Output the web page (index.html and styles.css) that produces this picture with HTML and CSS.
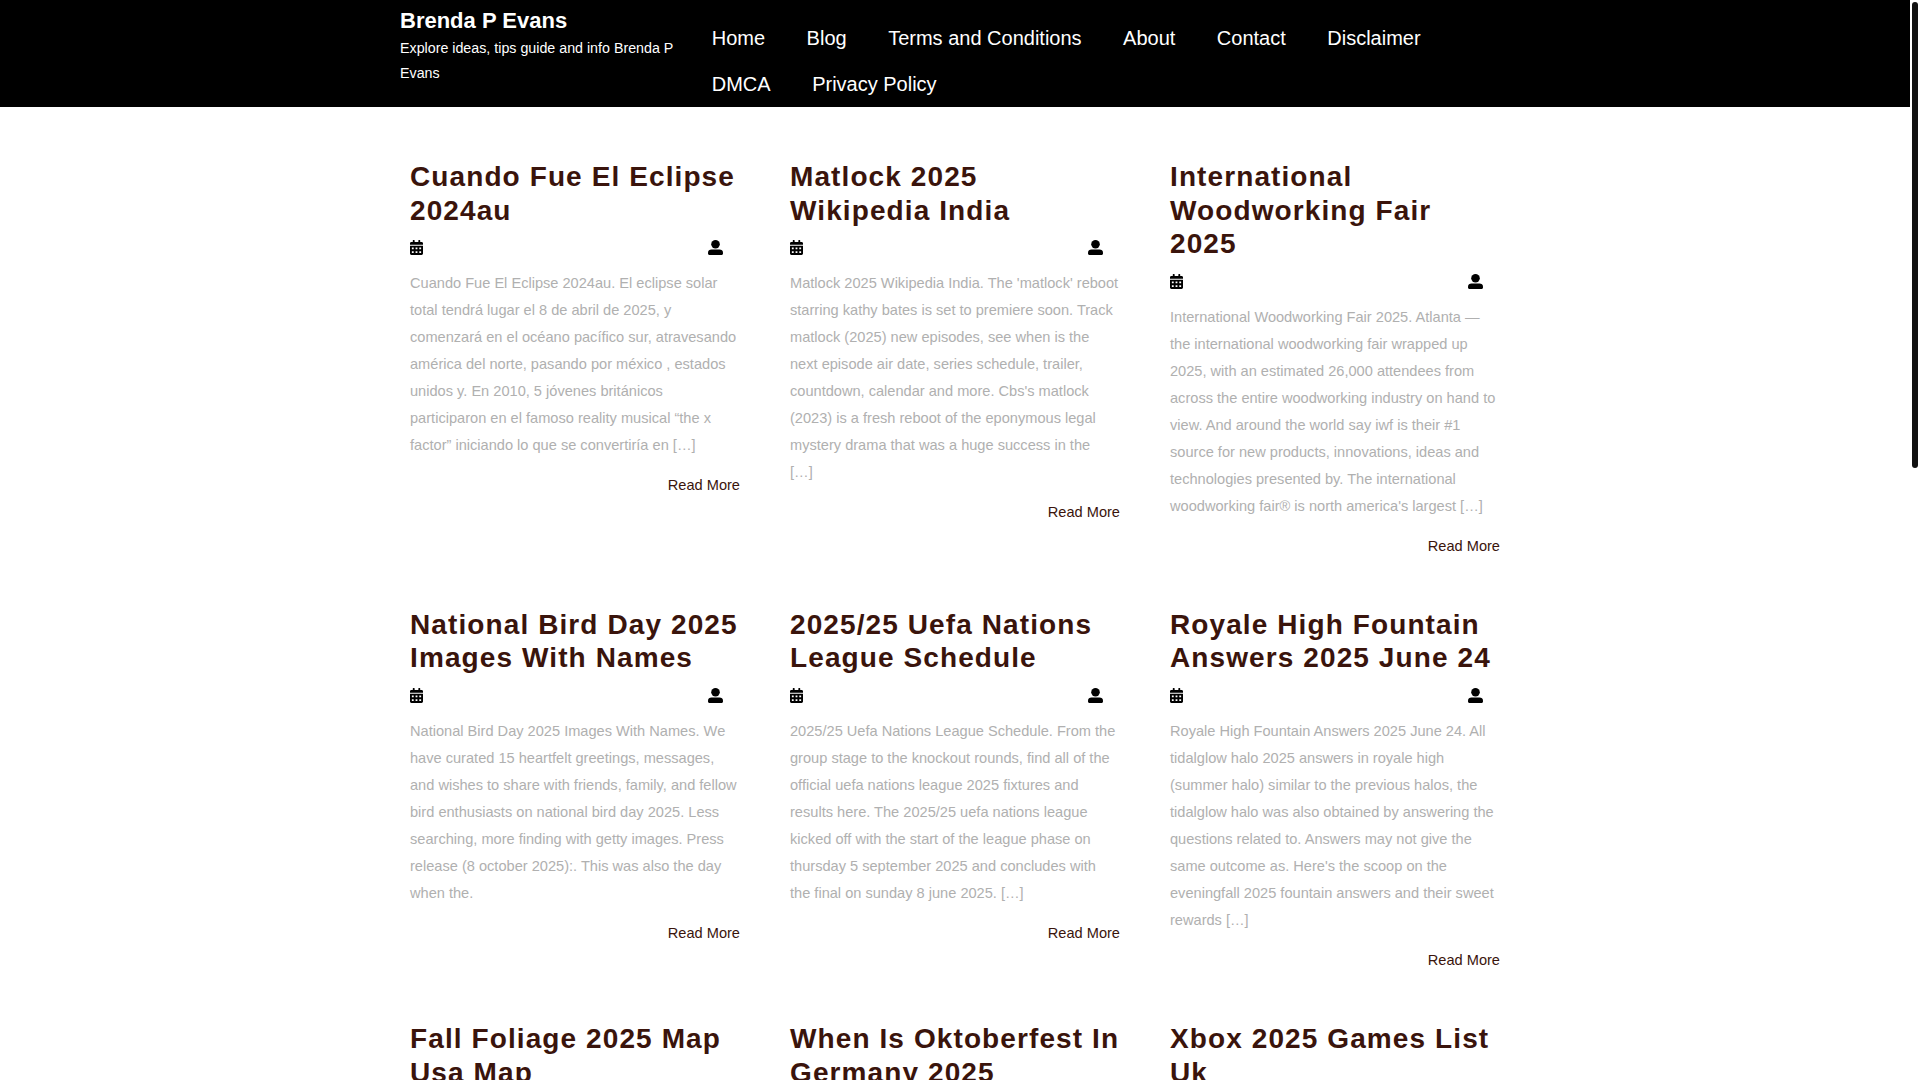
FILE: index.html
```html
<!DOCTYPE html>
<html lang="en">
<head>
    <meta charset="UTF-8">
    <meta name="viewport" content="width=device-width, initial-scale=1.0">
    <title>Brenda P Evans</title>
    <link rel="stylesheet" href="styles.css">
</head>
<body>

    <!-- Icon definitions -->
    <svg class="icon-defs" aria-hidden="true">
        <symbol id="icon-calendar" viewBox="0 0 448 512">
            <path d="M0 464c0 26.5 21.5 48 48 48h352c26.5 0 48-21.5 48-48V192H0v272zm320-196c0-6.6 5.4-12 12-12h40c6.6 0 12 5.4 12 12v40c0 6.6-5.4 12-12 12h-40c-6.6 0-12-5.4-12-12v-40zm0 128c0-6.6 5.4-12 12-12h40c6.6 0 12 5.4 12 12v40c0 6.6-5.4 12-12 12h-40c-6.6 0-12-5.4-12-12v-40zM192 268c0-6.6 5.4-12 12-12h40c6.6 0 12 5.4 12 12v40c0 6.6-5.4 12-12 12h-40c-6.6 0-12-5.4-12-12v-40zm0 128c0-6.6 5.4-12 12-12h40c6.6 0 12 5.4 12 12v40c0 6.6-5.4 12-12 12h-40c-6.6 0-12-5.4-12-12v-40zM64 268c0-6.6 5.4-12 12-12h40c6.6 0 12 5.4 12 12v40c0 6.6-5.4 12-12 12H76c-6.6 0-12-5.4-12-12v-40zm0 128c0-6.6 5.4-12 12-12h40c6.6 0 12 5.4 12 12v40c0 6.6-5.4 12-12 12H76c-6.6 0-12-5.4-12-12v-40zM400 64h-48V16c0-8.8-7.2-16-16-16h-32c-8.8 0-16 7.2-16 16v48H160V16c0-8.8-7.2-16-16-16h-32c-8.8 0-16 7.2-16 16v48H48C21.5 64 0 85.5 0 112v48h448v-48c0-26.5-21.5-48-48-48z"/>
        </symbol>
        <symbol id="icon-user" viewBox="0 0 15 15">
            <ellipse cx="7.5" cy="4.2" rx="4.3" ry="4.2"/>
            <path d="M3.5 9.5h8c2 0 3.5 1.2 3.5 3v1c0 .8-.7 1.5-1.5 1.5h-12c-.8 0-1.5-.7-1.5-1.5v-1c0-1.8 1.5-3 3.5-3z"/>
        </symbol>
    </svg>

    <!-- Scrollbar thumb, drawn over the page -->
    <div class="scroll-thumb"></div>

    <header class="site-header">
        <div class="header-inner">
            <div class="branding">
                <h1 class="site-title"><a href="#">Brenda P Evans</a></h1>
                <p class="site-tagline">Explore ideas, tips guide and info Brenda P Evans</p>
            </div>
            <nav class="main-nav">
                <a href="#">Home</a>
                <a href="#">Blog</a>
                <a href="#">Terms and Conditions</a>
                <a href="#">About</a>
                <a href="#">Contact</a>
                <a href="#">Disclaimer</a>
                <a href="#">DMCA</a>
                <a href="#">Privacy Policy</a>
            </nav>
        </div>
    </header>

    <main class="post-grid">

        <article class="post">
            <h2 class="post-title"><a href="#">Cuando Fue El Eclipse 2024au</a></h2>
            <div class="post-meta">
                <svg class="icon icon-date"><use href="#icon-calendar"></use></svg>
                <svg class="icon icon-author"><use href="#icon-user"></use></svg>
            </div>
            <p class="post-text">Cuando Fue El Eclipse 2024au. El eclipse solar total tendrá lugar el 8 de abril de 2025, y comenzará en el océano pacífico sur, atravesando américa del norte, pasando por méxico , estados unidos y. En 2010, 5 jóvenes británicos participaron en el famoso reality musical “the x factor” iniciando lo que se convertiría en […]</p>
            <a class="read-more" href="#">Read More</a>
        </article>

        <article class="post">
            <h2 class="post-title"><a href="#">Matlock 2025 Wikipedia India</a></h2>
            <div class="post-meta">
                <svg class="icon icon-date"><use href="#icon-calendar"></use></svg>
                <svg class="icon icon-author"><use href="#icon-user"></use></svg>
            </div>
            <p class="post-text">Matlock 2025 Wikipedia India. The 'matlock' reboot starring kathy bates is set to premiere soon. Track matlock (2025) new episodes, see when is the next episode air date, series schedule, trailer, countdown, calendar and more. Cbs's matlock (2023) is a fresh reboot of the eponymous legal mystery drama that was a huge success in the<br>[…]</p>
            <a class="read-more" href="#">Read More</a>
        </article>

        <article class="post">
            <h2 class="post-title"><a href="#">International Woodworking Fair 2025</a></h2>
            <div class="post-meta">
                <svg class="icon icon-date"><use href="#icon-calendar"></use></svg>
                <svg class="icon icon-author"><use href="#icon-user"></use></svg>
            </div>
            <p class="post-text">International Woodworking Fair 2025. Atlanta — the international woodworking fair wrapped up 2025, with an estimated 26,000 attendees from across the entire woodworking industry on hand to view. And around the world say iwf is their #1 source for new products, innovations, ideas and technologies presented by. The international woodworking fair® is north america's largest […]</p>
            <a class="read-more" href="#">Read More</a>
        </article>

        <article class="post">
            <h2 class="post-title"><a href="#">National Bird Day 2025 Images With Names</a></h2>
            <div class="post-meta">
                <svg class="icon icon-date"><use href="#icon-calendar"></use></svg>
                <svg class="icon icon-author"><use href="#icon-user"></use></svg>
            </div>
            <p class="post-text">National Bird Day 2025 Images With Names. We have curated 15 heartfelt greetings, messages, and wishes to share with friends, family, and fellow bird enthusiasts on national bird day 2025. Less searching, more finding with getty images. Press release (8 october 2025):. This was also the day when the.</p>
            <a class="read-more" href="#">Read More</a>
        </article>

        <article class="post">
            <h2 class="post-title"><a href="#">2025/25 Uefa Nations League Schedule</a></h2>
            <div class="post-meta">
                <svg class="icon icon-date"><use href="#icon-calendar"></use></svg>
                <svg class="icon icon-author"><use href="#icon-user"></use></svg>
            </div>
            <p class="post-text">2025/25 Uefa Nations League Schedule. From the group stage to the knockout rounds, find all of the official uefa nations league 2025 fixtures and results here. The 2025/25 uefa nations league kicked off with the start of the league phase on thursday 5 september 2025 and concludes with the final on sunday 8 june 2025. […]</p>
            <a class="read-more" href="#">Read More</a>
        </article>

        <article class="post">
            <h2 class="post-title"><a href="#">Royale High Fountain Answers 2025 June 24</a></h2>
            <div class="post-meta">
                <svg class="icon icon-date"><use href="#icon-calendar"></use></svg>
                <svg class="icon icon-author"><use href="#icon-user"></use></svg>
            </div>
            <p class="post-text">Royale High Fountain Answers 2025 June 24. All tidalglow halo 2025 answers in royale high (summer halo) similar to the previous halos, the tidalglow halo was also obtained by answering the questions related to. Answers may not give the same outcome as. Here's the scoop on the eveningfall 2025 fountain answers and their sweet rewards […]</p>
            <a class="read-more" href="#">Read More</a>
        </article>

        <article class="post">
            <h2 class="post-title"><a href="#">Fall Foliage 2025 Map Usa Map</a></h2>
        </article>

        <article class="post">
            <h2 class="post-title"><a href="#">When Is Oktoberfest In Germany 2025</a></h2>
        </article>

        <article class="post">
            <h2 class="post-title"><a href="#">Xbox 2025 Games List Uk</a></h2>
        </article>

    </main>

</body>
</html>
```

FILE: styles.css
```css
* {
    margin: 0;
    padding: 0;
    box-sizing: border-box;
}
html {
    height: 1080px;
    overflow: hidden;
}
body {
    background: #fff;
    font-family: "Liberation Sans", Arial, sans-serif;
    font-size: 14.6px;
    padding-right: 10px;
}
a {
    color: inherit;
    text-decoration: none;
}
.icon-defs {
    display: none;
}
.scroll-thumb {
    position: fixed;
    top: 2px;
    right: 2px;
    width: 6px;
    height: 466px;
    background: #111;
    border-radius: 3px;
}

/* Header */
.site-header {
    background: #000;
    color: #fff;
    height: 107px;
}
.header-inner {
    width: 1140px;
    margin: 0 auto;
    padding-left: 15px;
    display: flex;
}
.branding {
    width: 291px;
    flex-shrink: 0;
    padding-top: 8px;
}
.site-title {
    font-size: 22px;
    line-height: 26px;
    font-weight: bold;
    margin-bottom: 2px;
}
.site-tagline {
    font-size: 14.25px;
    line-height: 25px;
}
.main-nav {
    flex: 1;
    display: flex;
    flex-wrap: wrap;
    align-content: flex-start;
    padding-top: 15px;
}
.main-nav a {
    font-size: 20px;
    line-height: 46px;
    padding: 0 20.75px;
}

/* Posts */
.post-grid {
    width: 1140px;
    margin: 0 auto;
    padding-top: 53px;
    display: grid;
    grid-template-columns: repeat(3, 380px);
    align-items: start;
}
.post {
    padding: 0 25px;
    margin-bottom: 48px;
}
.post-title {
    font-size: 28px;
    line-height: 33.6px;
    font-weight: bold;
    letter-spacing: 1.1px;
    color: #3a140c;
}
.post-meta {
    display: flex;
    justify-content: space-between;
    padding-right: 17px;
    margin-top: 13px;
    height: 18px;
}
.icon {
    height: 15px;
    fill: #000;
}
.icon-date {
    width: 13px;
}
.icon-author {
    width: 15px;
}
.post-text {
    margin-top: 12px;
    color: #b0b0b0;
    line-height: 27px;
}
.read-more {
    display: block;
    margin-top: 13px;
    text-align: right;
    color: #3a140c;
    line-height: 27px;
}
```
